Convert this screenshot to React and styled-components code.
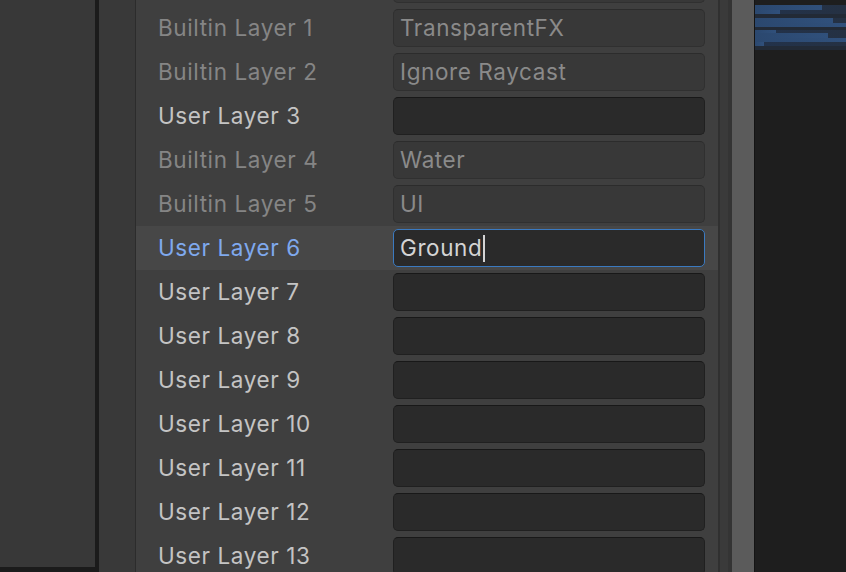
import React from "react";
import styled, { createGlobalStyle } from "styled-components";

const Global = createGlobalStyle`
  html, body { margin: 0; padding: 0; background: #1e1e1e; overflow: hidden; }
  body { font-family: Inter, "Noto Sans", "Liberation Sans", sans-serif; }
  #root { width: 846px; height: 572px; }
`;

const Frame = styled.div`
  display: flex;
  width: 846px;
  height: 572px;
  overflow: hidden;
`;

const LeftPanel = styled.div`
  width: 95px;
  flex: none;
  box-sizing: border-box;
  background: #383838;
  border-bottom: 5px solid #1b1b1b;
`;

const Splitter = styled.div`
  width: ${(p) => p.$w}px;
  flex: none;
  background: ${(p) => p.$c};
`;

const SidePanel = styled.div`
  width: 36px;
  flex: none;
  background: #393939;
  border-right: 1px solid #2c2c2c;
`;

const Main = styled.div`
  width: 582px;
  flex: none;
  background: #3f3f3f;
  overflow: hidden;
`;

const List = styled.div`
  display: flex;
  flex-direction: column;
  margin-top: -38px;
`;

const Row = styled.div`
  display: flex;
  align-items: center;
  height: 44px;
  flex: none;
  padding-left: 22px;
  padding-right: 13px;
  background: ${(p) => (p.$selected ? "#474747" : "transparent")};
`;

const Label = styled.div`
  width: 235px;
  flex: none;
  font-size: 22.5px;
  letter-spacing: 0.6px;
  margin-top: -2px;
  color: ${(p) =>
    p.$selected ? "#7fa9ee" : p.$builtin ? "#858585" : "#c4c4c4"};
  white-space: nowrap;
`;

const Field = styled.div`
  box-sizing: border-box;
  width: 312px;
  height: 38px;
  flex: none;
  display: flex;
  align-items: center;
  padding-left: 6px;
  padding-bottom: 2px;
  border-radius: 5px;
  font-size: 22.5px;
  letter-spacing: 0.6px;
  white-space: nowrap;
  background: ${(p) => (p.$builtin ? "#383838" : "#2a2a2a")};
  border: ${(p) =>
    p.$focused
      ? "1.5px solid #3b7ac0"
      : p.$builtin
      ? "1px solid #303030"
      : "1px solid #202020"};
  border-top-color: ${(p) =>
    p.$focused ? "#3b7ac0" : p.$builtin ? "#2c2c2c" : "#181818"};
  color: ${(p) => (p.$builtin ? "#8a8a8a" : "#d4d4d4")};
`;

const Caret = styled.span`
  display: inline-block;
  width: 1.5px;
  height: 27px;
  margin-left: 1px;
  margin-top: 2px;
  background: #d4d4d4;
`;

const Scrollbar = styled.div`
  width: 22px;
  flex: none;
  background: #5b5b5b;
`;

const RightPanel = styled.div`
  flex: 1;
  background: #1e1e1e;
  padding-top: 5px;
`;

const layers = [
  { name: "", value: "", builtin: true },
  { name: "Builtin Layer 1", value: "TransparentFX", builtin: true },
  { name: "Builtin Layer 2", value: "Ignore Raycast", builtin: true },
  { name: "User Layer 3", value: "" },
  { name: "Builtin Layer 4", value: "Water", builtin: true },
  { name: "Builtin Layer 5", value: "UI", builtin: true },
  { name: "User Layer 6", value: "Ground", focused: true },
  { name: "User Layer 7", value: "" },
  { name: "User Layer 8", value: "" },
  { name: "User Layer 9", value: "" },
  { name: "User Layer 10", value: "" },
  { name: "User Layer 11", value: "" },
  { name: "User Layer 12", value: "" },
  { name: "User Layer 13", value: "" },
];

const bars = [
  { y: 0, h: 5, w: 67 },
  { y: 5, h: 4, w: 25 },
  { y: 13, h: 5, w: 78 },
  { y: 18, h: 4, w: 91 },
  { y: 25, h: 3, w: 21 },
  { y: 28, h: 5, w: 73 },
  { y: 33, h: 4, w: 91 },
  { y: 37, h: 4, w: 9 },
];

function Thumbnails() {
  return (
    <svg width="91" height="45" viewBox="0 0 91 45">
      <defs>
        <linearGradient id="dk" x1="0" x2="1" y1="0" y2="0">
          <stop offset="0" stopColor="#22324b" />
          <stop offset="1" stopColor="#253143" />
        </linearGradient>
        <linearGradient id="br" x1="0" x2="1" y1="0" y2="0">
          <stop offset="0" stopColor="#2b486f" />
          <stop offset="1" stopColor="#30507b" />
        </linearGradient>
      </defs>
      <rect x="0" y="0" width="91" height="45" fill="url(#dk)" />
      <rect x="0" y="9" width="91" height="4" fill="#222a36" />
      <rect x="0" y="21" width="91" height="4" fill="#222a36" />
      <rect x="0" y="41" width="91" height="4" fill="#222a36" />
      {bars.map((b, i) => (
        <rect key={i} x="0" y={b.y} width={b.w} height={b.h} fill="url(#br)" />
      ))}
    </svg>
  );
}

export default function App() {
  return (
    <>
      <Global />
      <Frame>
        <LeftPanel />
        <Splitter $w={4} $c="#1b1b1b" />
        <SidePanel />
        <Main>
          <List>
            {layers.map((l, i) => (
              <Row key={i} $selected={l.focused}>
                <Label $builtin={l.builtin} $selected={l.focused}>
                  {l.name}
                </Label>
                <Field $builtin={l.builtin} $focused={l.focused}>
                  {l.value}
                  {l.focused && <Caret />}
                </Field>
              </Row>
            ))}
          </List>
        </Main>
        <Splitter $w={2} $c="#303030" />
        <Splitter $w={8} $c="#3a3a3a" />
        <Splitter $w={4} $c="#343434" />
        <Scrollbar />
        <Splitter $w={1} $c="#141414" />
        <RightPanel>
          <Thumbnails />
        </RightPanel>
      </Frame>
    </>
  );
}
